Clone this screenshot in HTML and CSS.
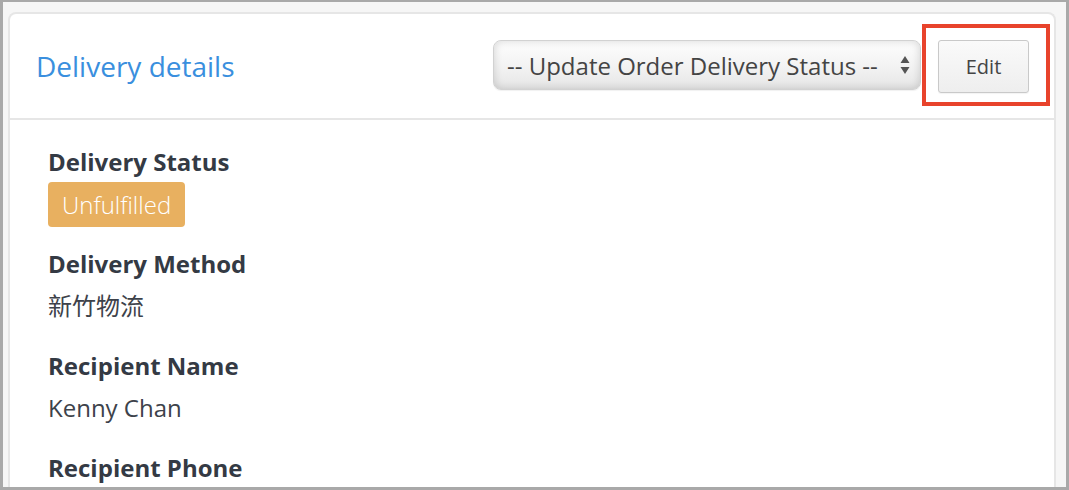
FILE: index.html
```html
<!doctype html>
<html>
<head>
<meta charset="utf-8">
<title>Delivery details</title>
<link rel="stylesheet" href="styles.css">
</head>
<body>
<div class="frame">
<div class="card">
	<div class="card-head">
		<h2 class="title">Delivery details</h2>
		<div class="actions">
			<label class="select-wrap">
				<select class="status-select">
					<option>-- Update Order Delivery Status --</option>
					<option>Unfulfilled</option>
					<option>Fulfilled</option>
				</select>
				<svg class="arrows" width="10" height="20" viewBox="0 0 10 20"><path d="M5 1 L9.5 8 H0.5 Z M5 19 L9.5 12 H0.5 Z" fill="#555"/></svg>
			</label>
			<div class="highlight">
				<button class="btn-edit">Edit</button>
			</div>
		</div>
	</div>
	<div class="card-body">
		<div class="field field-status">
			<div class="label">Delivery Status</div>
			<span class="badge">Unfulfilled</span>
		</div>
		<div class="field">
			<div class="label">Delivery Method</div>
			<div class="value">新竹物流</div>
		</div>
		<div class="field">
			<div class="label">Recipient Name</div>
			<div class="value">Kenny Chan</div>
		</div>
		<div class="field">
			<div class="label">Recipient Phone</div>
		</div>
	</div>
</div>
</div>
</body>
</html>
```

FILE: styles.css
```css
html, body {
	margin: 0;
	height: 100%;
}
body {
	font-family: "Open Sans", "Noto Sans CJK TC", sans-serif;
	color: #393e46;
	overflow: hidden;
}
.frame {
	box-sizing: border-box;
	height: 490px;
	background: #f6f6f6;
	border: solid #a9a9a9;
	border-width: 2px 3px 3px 3px;
	padding: 10px 10px 0 5px;
	overflow: hidden;
}
.card {
	background: #fff;
	border: 2px solid #e6e6e6;
	border-bottom: 0;
	border-radius: 8px 8px 0 0;
	height: 600px;
}
.card-head {
	display: flex;
	align-items: center;
	justify-content: space-between;
	height: 104px;
	padding: 0 4px 0 26px;
	border-bottom: 2px solid #e6e6e6;
}
.title {
	margin: 0;
	font-size: 28px;
	font-weight: 400;
	color: #3a8fde;
}
.actions {
	display: flex;
	align-items: center;
	gap: 1px;
	margin-top: -2px;
}
.select-wrap {
	position: relative;
	display: block;
}
.status-select {
	appearance: none;
	-webkit-appearance: none;
	width: 428px;
	height: 50px;
	padding: 0 40px 0 13px;
	font-family: "Open Sans", sans-serif;
	font-size: 24px;
	color: #444;
	border: 1px solid #d2d2d2;
	border-radius: 8px;
	background: linear-gradient(#fefefe, #f2f2f2 55%, #e6e6e6);
	box-shadow: inset 0 0 8px rgba(0, 0, 0, 0.16), 0 1px 1px rgba(0, 0, 0, 0.06);
	outline: none;
}
.arrows {
	position: absolute;
	right: 11px;
	top: 15px;
	pointer-events: none;
}
.highlight {
	border: 4px solid #e8432c;
	padding: 12px 17px 9px 12px;
}
.btn-edit {
	display: block;
	width: 91px;
	height: 53px;
	font-family: "Open Sans", sans-serif;
	font-size: 20px;
	color: #444;
	background: linear-gradient(#fafafa, #eeeeee);
	border: 1px solid #c9c9c9;
	border-radius: 3px;
	box-shadow: 0 1px 1px rgba(0, 0, 0, 0.05);
}
.card-body {
	padding: 27px 38px;
}
.field {
	margin-bottom: 30px;
}
.field-status {
	margin-bottom: 22px;
}
.label {
	font-size: 24px;
	font-weight: 700;
	line-height: 30px;
	color: #343a44;
}
.value {
	font-size: 24px;
	line-height: 30px;
	margin-top: 12px;
	color: #3d424a;
}
.badge {
	display: inline-block;
	margin-top: 5px;
	padding: 0 14px;
	height: 45px;
	line-height: 45px;
	font-size: 24px;
	font-weight: 300;
	color: #fff;
	background: #e8b060;
	border-radius: 4px;
}
```
